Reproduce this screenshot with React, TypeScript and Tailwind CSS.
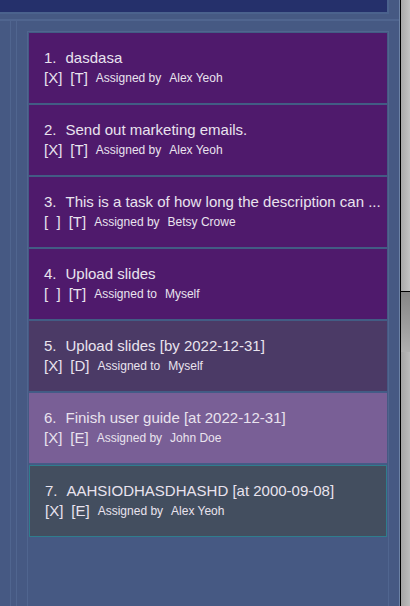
type Task = {
  title: string;
  done: boolean;
  kind: 'T' | 'D' | 'E';
  relation: string;
  person: string;
  tone: string;
};

const todo = 'border-y border-[#425c84] bg-[#4f1a6c]';

const tasks: Task[] = [
  { title: 'dasdasa', done: true, kind: 'T', relation: 'Assigned by', person: 'Alex Yeoh', tone: todo },
  { title: 'Send out marketing emails.', done: true, kind: 'T', relation: 'Assigned by', person: 'Alex Yeoh', tone: todo },
  { title: 'This is a task of how long the description can ...', done: false, kind: 'T', relation: 'Assigned by', person: 'Betsy Crowe', tone: todo },
  { title: 'Upload slides', done: false, kind: 'T', relation: 'Assigned to', person: 'Myself', tone: todo },
  { title: 'Upload slides [by 2022-12-31]', done: true, kind: 'D', relation: 'Assigned to', person: 'Myself', tone: 'border-y border-[#425c84] bg-[#4b3a66]' },
  { title: 'Finish user guide [at 2022-12-31]', done: true, kind: 'E', relation: 'Assigned by', person: 'John Doe', tone: 'border-y border-[#455b87] bg-[#795f96]' },
  { title: 'AAHSIODHASDHASHD [at 2000-09-08]', done: true, kind: 'E', relation: 'Assigned by', person: 'Alex Yeoh', tone: 'mt-px border border-[#2f7d8d] bg-[#434e5f]' },
];

function TaskRow({ task, number }: { task: Task; number: number }) {
  return (
    <li className={`pr-1 pl-[15px] pt-[15px] pb-[15px] text-[15px] leading-5 whitespace-nowrap ${task.tone}`}>
      <div className="flex gap-2">
        <span>{number}.</span>
        <span className="pl-px">{task.title}</span>
      </div>
      <div className="flex gap-2">
        <span className="whitespace-pre">{task.done ? '[X]' : '[  ]'}</span>
        <span>[{task.kind}]</span>
        <span className="flex gap-2 text-xs leading-5">
          <span>{task.relation}</span>
          <span>{task.person}</span>
        </span>
      </div>
    </li>
  );
}

export default function App() {
  return (
    <div className="flex h-screen overflow-hidden bg-[#465983] font-['Liberation_Sans',Arial,sans-serif] text-[#e9e3ee]">
      <main className="flex min-w-0 flex-1 flex-col border-r border-[#6d83a6]">
        <header className="mr-[10px] h-[14px] shrink-0 border-r-2 border-b-2 border-[#4b628d] bg-[#25306b]" />
        <div className="mt-[5px] flex min-h-0 flex-1 border-t-2 border-[#50658f]">
          <div className="w-[11px] shrink-0 border-r border-[#50658f]" />
          <section className="ml-[5px] min-w-0 flex-1 border-l border-[#50658f] px-[10px] pt-[10px]">
            <ol className="h-full border-x border-t border-[#50658f] px-px">
              {tasks.map((task, index) => (
                <TaskRow key={task.title} task={task} number={index + 1} />
              ))}
            </ol>
          </section>
        </div>
      </main>
      <aside className="flex w-[10px] shrink-0 flex-col border-l border-black">
        <div className="h-[292px] border-b border-black bg-linear-to-r from-[#a9a9a9] to-[#c4c4c4]" />
        <div className="h-[60px] bg-linear-to-b from-[#858585] to-[#b0b0b0]" />
        <div className="flex-1 bg-linear-to-r from-[#a5a5a5] to-[#bcbcbc]" />
      </aside>
    </div>
  );
}
